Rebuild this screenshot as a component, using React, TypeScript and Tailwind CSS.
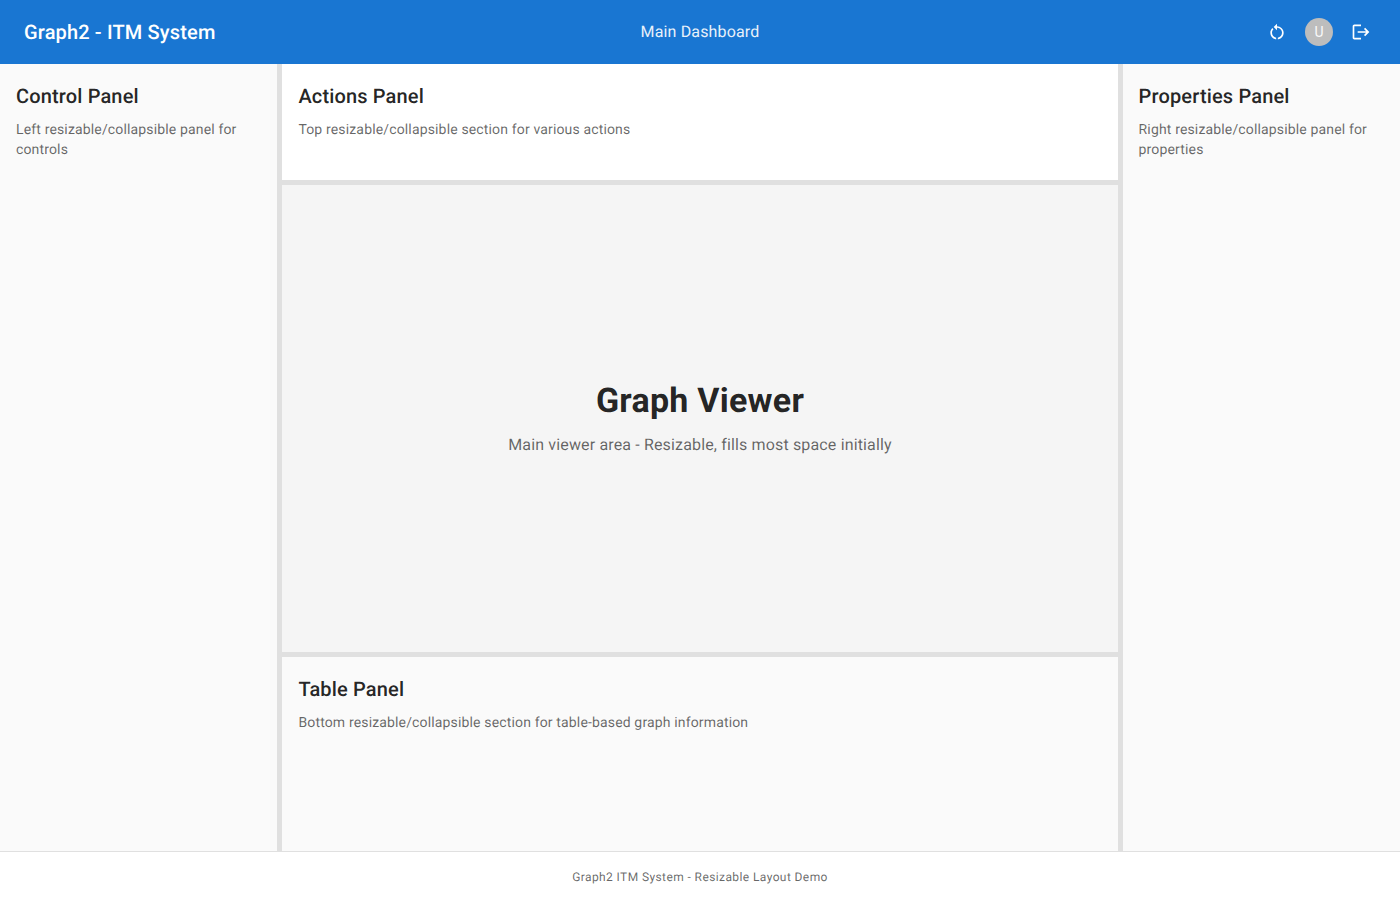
import { MdLogout, MdRestartAlt } from "react-icons/md";

function Panel({ title, text, className }: { title: string; text: string; className: string }) {
  return (
    <section className={className}>
      <div className="p-4">
        <h2 className="mb-2 text-[20px] leading-8 font-medium tracking-[0.15px]">{title}</h2>
        <p className="text-sm tracking-[0.15px] text-black/60">{text}</p>
      </div>
    </section>
  );
}

export default function App() {
  return (
    <div className="flex h-screen flex-col bg-white font-[Roboto,Helvetica,Arial,sans-serif] text-black/87 [text-rendering:geometricPrecision]">
      <header className="grid h-16 shrink-0 grid-cols-3 items-center bg-[#1976d2] px-6 text-white">
        <h1 className="text-[20px] leading-8 font-medium tracking-[0.15px]">Graph2 - ITM System</h1>
        <p className="text-center text-base tracking-[0.15px] opacity-90">Main Dashboard</p>
        <div className="flex items-center justify-end gap-2">
          <button aria-label="Reset layout" className="p-[5px]">
            <MdRestartAlt size={20} />
          </button>
          <button aria-label="User" className="p-[5px]">
            <span className="flex size-7 items-center justify-center rounded-full bg-[#bdbdbd] text-sm text-[#fafafa]">U</span>
          </button>
          <button aria-label="Log out" className="p-[5px]">
            <MdLogout size={20} />
          </button>
        </div>
      </header>
      <main className="flex min-h-0 grow">
        <Panel title="Control Panel" text="Left resizable/collapsible panel for controls" className="w-1/5 border-r border-[#e0e0e0] bg-[#fafafa]" />
        <div className="w-1 shrink-0 bg-[#e0e0e0]" />
        <div className="flex w-3/5 flex-col">
          <Panel title="Actions Panel" text="Top resizable/collapsible section for various actions" className="h-[15%] border-b border-[#e0e0e0] bg-white" />
          <div className="h-1 shrink-0 bg-[#e0e0e0]" />
          <section className="flex h-3/5 flex-col items-center justify-center bg-[#f5f5f5]">
            <h2 className="mb-3 text-[34px] leading-10 font-bold tracking-[0.25px]">Graph Viewer</h2>
            <p className="text-base tracking-[0.15px] text-black/60">Main viewer area - Resizable, fills most space initially</p>
          </section>
          <div className="h-1 shrink-0 bg-[#e0e0e0]" />
          <Panel title="Table Panel" text="Bottom resizable/collapsible section for table-based graph information" className="h-1/4 border-t border-[#e0e0e0] bg-[#fafafa]" />
        </div>
        <div className="w-1 shrink-0 bg-[#e0e0e0]" />
        <Panel title="Properties Panel" text="Right resizable/collapsible panel for properties" className="w-1/5 border-l border-[#e0e0e0] bg-[#fafafa]" />
      </main>
      <footer className="flex h-[49px] shrink-0 items-center justify-center border-t border-[#e0e0e0] px-4 text-xs leading-5 tracking-[0.4px] text-black/60">
        <p className="pt-px">Graph2 ITM System - Resizable Layout Demo</p>
      </footer>
    </div>
  );
}
